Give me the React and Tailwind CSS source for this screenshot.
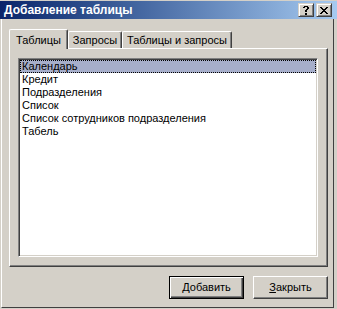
import React from "react";

const items = [
  "Календарь",
  "Кредит",
  "Подразделения",
  "Список",
  "Список сотрудников подразделения",
  "Табель",
];

// tiny pixel glyphs for the caption buttons
const HELP = [
  ".XXXX.",
  "XX..XX",
  "....XX",
  "...XX.",
  "..XX..",
  "..XX..",
  "......",
  "..XX..",
  "..XX..",
];

const CLOSE = [
  "XX....XX",
  ".XX..XX.",
  "..XXXX..",
  "...XX...",
  "..XXXX..",
  ".XX..XX.",
  "XX....XX",
];

function Pixels({ rows }) {
  const w = rows[0].length;
  const h = rows.length;
  return (
    <svg width={w} height={h} viewBox={`0 0 ${w} ${h}`} shapeRendering="crispEdges">
      {rows.flatMap((r, y) =>
        r.split("").map((c, x) =>
          c === "X" ? <rect key={`${x}-${y}`} x={x} y={y} width="1" height="1" fill="#000" /> : null
        )
      )}
    </svg>
  );
}

function CaptionButton({ rows }) {
  return (
    <div className="flex h-[14px] w-[16px] items-center justify-center border border-t-[#d4d0c8] border-l-[#d4d0c8] border-r-[#404040] border-b-[#404040] bg-[#d4d0c8] shadow-[inset_1px_1px_0_#ffffff,inset_-1px_-1px_0_#808080]">
      <Pixels rows={rows} />
    </div>
  );
}

function Tab({ label, active, width }) {
  if (active) {
    return (
      <div
        className={`${width} relative z-10 -mb-[1px] flex h-[20px] justify-center rounded-tl-[2px] rounded-tr-[2px] border-l border-t border-l-white border-t-white border-r border-r-[#404040] bg-[#d4d0c8] pt-[4px] leading-[13px] shadow-[inset_-1px_0_0_#808080]`}
      >
        {label}
      </div>
    );
  }
  return (
    <div
      className={`${width} flex h-[17px] justify-center rounded-tl-[2px] rounded-tr-[2px] border-l border-t border-l-white border-t-white border-r border-r-[#404040] bg-[#d4d0c8] pt-[2px] leading-[13px] shadow-[inset_-1px_0_0_#808080]`}
    >
      {label}
    </div>
  );
}

export default function App() {
  return (
    <div
      className="relative h-[309px] w-[337px] overflow-hidden bg-[#d4d0c8] pt-[1px] text-[11px] text-black"
      style={{ fontFamily: '"Liberation Sans", Arial, sans-serif' }}
    >
      {/* title bar */}
      <div className="flex h-[18px] w-[337px] items-center bg-gradient-to-r from-[#0a246a] to-[#a6caf0] pl-[4px] pr-[5px]">
        <span className="flex-1 text-[12px] font-bold leading-[18px] text-white">Добавление таблицы</span>
        <div className="flex gap-[2px]">
          <CaptionButton rows={HELP} />
          <CaptionButton rows={CLOSE} />
        </div>
      </div>

      {/* window body */}
      <div className="ml-[1px] flex h-[289px] w-[333px] flex-col border-b border-l border-r border-b-[#404040] border-l-white border-r-[#404040] pt-[10px]">
        <div className="ml-[7px] flex h-[19px] items-end">
          <Tab label="Таблицы" active width="w-[59px]" />
          <Tab label="Запросы" width="w-[54px]" />
          <Tab label="Таблицы и запросы" width="w-[110px]" />
        </div>

        <div className="ml-[7px] h-[219px] w-[319px] border border-b-[#404040] border-l-white border-r-[#404040] border-t-white pl-[8px] pt-[9px] shadow-[inset_-1px_-1px_0_#808080]">
          <div className="h-[199px] w-[300px] border border-b-white border-l-[#808080] border-r-white border-t-[#808080] bg-white p-[1px] shadow-[inset_1px_1px_0_#404040,inset_-1px_-1px_0_#d4d0c8]">
            {items.map((it, i) => (
              <div
                key={it}
                className={
                  i === 0
                    ? "h-[13px] border border-dotted border-black bg-[#a6aeca] pl-[1px] leading-[11px]"
                    : "h-[13px] pl-[2px] leading-[13px]"
                }
              >
                {it}
              </div>
            ))}
          </div>
        </div>

        <div className="mr-[5px] mt-[9px] flex justify-end gap-[9px]">
          <button className="h-[23px] w-[75px] border border-black bg-[#d4d0c8] leading-[13px] shadow-[inset_1px_1px_0_#ffffff,inset_-1px_-1px_0_#404040,inset_-2px_-2px_0_#808080]">
            <span className="underline">Д</span>обавить
          </button>
          <button className="h-[23px] w-[75px] border border-b-[#404040] border-l-white border-r-[#404040] border-t-white bg-[#d4d0c8] leading-[13px] shadow-[inset_-1px_-1px_0_#808080]">
            <span className="underline">З</span>акрыть
          </button>
        </div>
      </div>
    </div>
  );
}
